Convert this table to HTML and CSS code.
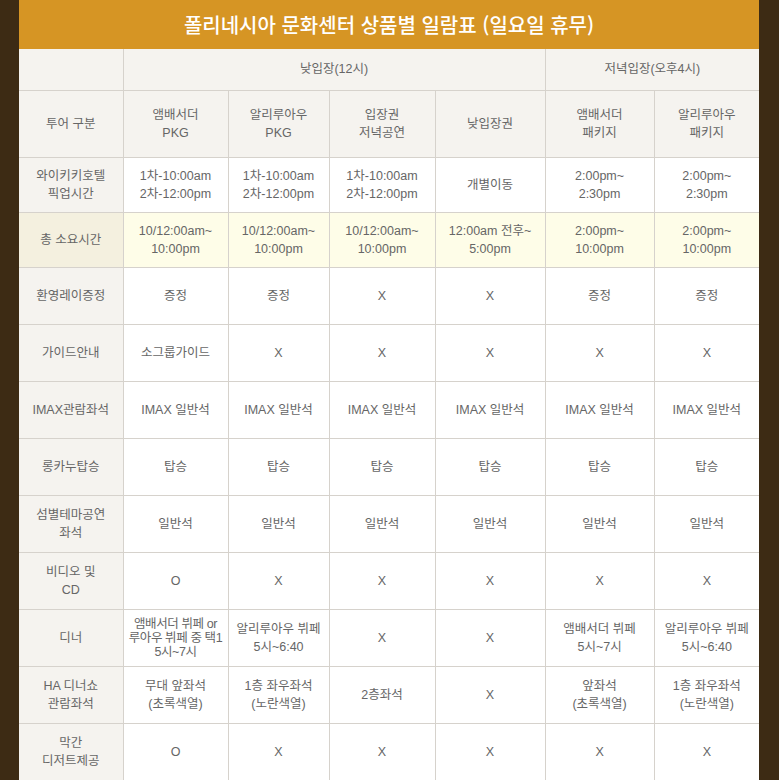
FILE: index.html
```html
<!DOCTYPE html>
<html lang="ko">
<head>
<meta charset="utf-8">
<title>폴리네시아 문화센터 상품별 일람표</title>
<link rel="stylesheet" href="styles.css">
</head>
<body>
<div class="page">
  <h1 class="title">폴리네시아 문화센터 상품별 일람표 (일요일 휴무)</h1>
  <table class="grid">
    <colgroup>
      <col class="c0"><col class="c1"><col class="c2"><col class="c3"><col class="c4"><col class="c5"><col class="c6">
    </colgroup>
    <tr class="r-top">
      <th class="lab"></th>
      <th colspan="4">낮입장(12시)</th>
      <th colspan="2">저녁입장(오후4시)</th>
    </tr>
    <tr class="r-head">
      <th class="lab">투어 구분</th>
      <th>앰배서더<br>PKG</th>
      <th>알리루아우<br>PKG</th>
      <th>입장권<br>저녁공연</th>
      <th>낮입장권</th>
      <th>앰배서더<br>패키지</th>
      <th>알리루아우<br>패키지</th>
    </tr>
    <tr class="r-55">
      <th class="lab">와이키키호텔<br>픽업시간</th>
      <td>1차-10:00am<br>2차-12:00pm</td>
      <td>1차-10:00am<br>2차-12:00pm</td>
      <td>1차-10:00am<br>2차-12:00pm</td>
      <td>개별이동</td>
      <td>2:00pm~<br>2:30pm</td>
      <td>2:00pm~<br>2:30pm</td>
    </tr>
    <tr class="r-55 hl">
      <th class="lab">총 소요시간</th>
      <td>10/12:00am~<br>10:00pm</td>
      <td>10/12:00am~<br>10:00pm</td>
      <td>10/12:00am~<br>10:00pm</td>
      <td>12:00am 전후~<br>5:00pm</td>
      <td>2:00pm~<br>10:00pm</td>
      <td>2:00pm~<br>10:00pm</td>
    </tr>
    <tr>
      <th class="lab">환영레이증정</th>
      <td>증정</td><td>증정</td><td>X</td><td>X</td><td>증정</td><td>증정</td>
    </tr>
    <tr>
      <th class="lab">가이드안내</th>
      <td>소그룹가이드</td><td>X</td><td>X</td><td>X</td><td>X</td><td>X</td>
    </tr>
    <tr>
      <th class="lab">IMAX관람좌석</th>
      <td>IMAX 일반석</td><td>IMAX 일반석</td><td>IMAX 일반석</td><td>IMAX 일반석</td><td>IMAX 일반석</td><td>IMAX 일반석</td>
    </tr>
    <tr>
      <th class="lab">롱카누탑승</th>
      <td>탑승</td><td>탑승</td><td>탑승</td><td>탑승</td><td>탑승</td><td>탑승</td>
    </tr>
    <tr>
      <th class="lab">섬별테마공연<br>좌석</th>
      <td>일반석</td><td>일반석</td><td>일반석</td><td>일반석</td><td>일반석</td><td>일반석</td>
    </tr>
    <tr>
      <th class="lab">비디오 및<br>CD</th>
      <td>O</td><td>X</td><td>X</td><td>X</td><td>X</td><td>X</td>
    </tr>
    <tr>
      <th class="lab">디너</th>
      <td class="tight">앰배서더 뷔페 or<br>루아우 뷔페 중 택1<br>5시~7시</td>
      <td>알리루아우 뷔페<br>5시~6:40</td>
      <td>X</td>
      <td>X</td>
      <td>앰배서더 뷔페<br>5시~7시</td>
      <td>알리루아우 뷔페<br>5시~6:40</td>
    </tr>
    <tr>
      <th class="lab">HA 디너쇼<br>관람좌석</th>
      <td>무대 앞좌석<br>(초록색열)</td>
      <td>1층 좌우좌석<br>(노란색열)</td>
      <td>2층좌석</td>
      <td>X</td>
      <td>앞좌석<br>(초록색열)</td>
      <td>1층 좌우좌석<br>(노란색열)</td>
    </tr>
    <tr>
      <th class="lab">막간<br>디저트제공</th>
      <td>O</td><td>X</td><td>X</td><td>X</td><td>X</td><td>X</td>
    </tr>
  </table>
</div>
</body>
</html>
```

FILE: styles.css
```css
html, body {
  margin: 0;
  padding: 0;
  background: #3d2b14;
}
body {
  font-family: "Liberation Sans", "Noto Sans CJK KR", sans-serif;
  color: #666;
}
.page {
  width: 740px;
  margin-left: 19px;
  background: #fff;
}
.title {
  margin: 0;
  height: 49px;
  display: flex;
  align-items: center;
  justify-content: center;
  background: #d69524;
  color: #fff;
  font-family: "Noto Sans CJK KR", sans-serif;
  font-weight: 500;
  font-size: 20px;
  letter-spacing: 0;
}
.grid {
  width: 740px;
  border-collapse: collapse;
  table-layout: fixed;
  font-size: 12.5px;
  line-height: 18px;
}
.c0 { width: 104px; }
.c1 { width: 105px; }
.c2 { width: 101px; }
.c3 { width: 106px; }
.c4 { width: 110px; }
.c5 { width: 109px; }
.c6 { width: 105px; }
.grid th, .grid td {
  border: 1px solid #d6d2cc;
  padding: 0 1px;
  text-align: center;
  vertical-align: middle;
  font-weight: normal;
  height: 57px;
  box-sizing: border-box;
}
.grid tr > :first-child { border-left: none; }
.grid tr > :last-child { border-right: none; }
.grid tr:first-child > * { border-top: none; }
.grid th { background: #f5f3ef; color: #666; }
.grid td { background: #fff; }
.grid .r-top > * { height: 41px; }
.grid .r-head > * { height: 67px; }
.grid .r-55 > * { height: 55px; }
.grid .hl td { background: #fefde8; }
.grid .hl th { background: #f4f0df; }
.grid .tight { line-height: 14px; letter-spacing: -0.4px; }
```
